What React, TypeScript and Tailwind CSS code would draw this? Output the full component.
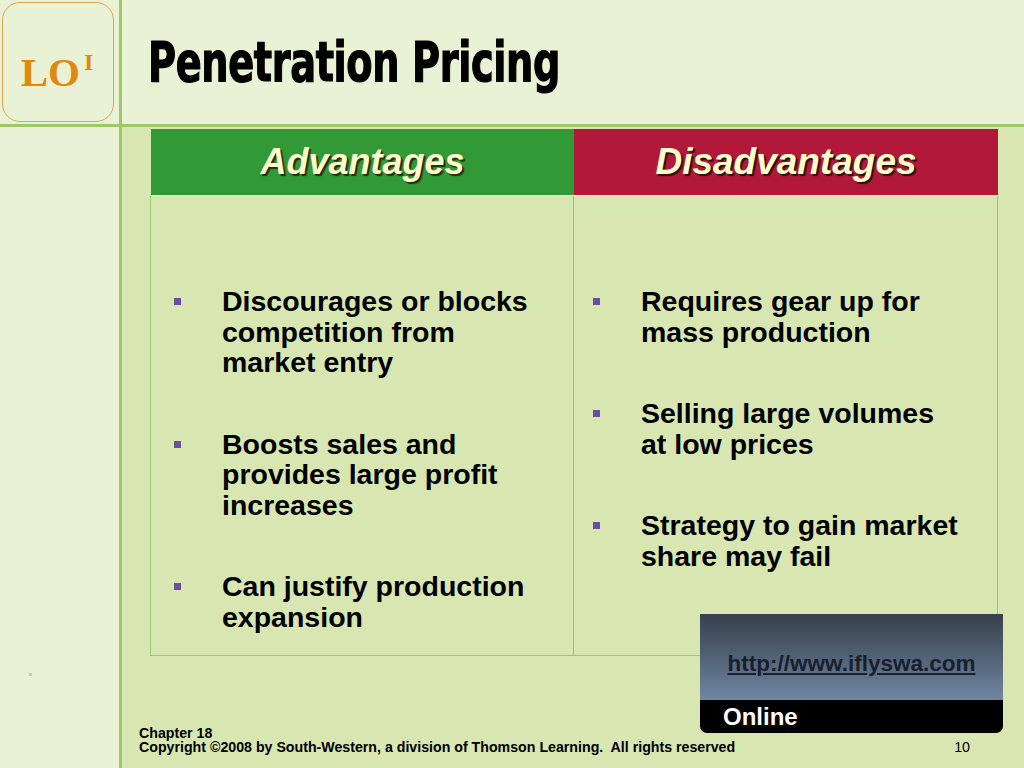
const advantages: string[][] = [
  ['Discourages or blocks', 'competition from', 'market entry'],
  ['Boosts sales and', 'provides large profit', 'increases'],
  ['Can justify production', 'expansion'],
];

const disadvantages: string[][] = [
  ['Requires gear up for', 'mass production'],
  ['Selling large volumes', 'at low prices'],
  ['Strategy to gain market', 'share may fail'],
];

const Bullets = ({ items, pad }: { items: string[][]; pad: string }) => (
  <ul className={`flex flex-col gap-[51px] pt-[90px] ${pad}`}>
    {items.map((lines, i) => (
      <li key={i} className="flex">
        <div className="w-[48px] shrink-0">
          <div className="mt-[12px] h-[7px] w-[7px] bg-[#6b4f9c]" />
        </div>
        <div className="whitespace-nowrap text-[28.5px] font-bold leading-[30.5px] text-black">
          {lines.map((l, j) => (
            <div key={j}>{l}</div>
          ))}
        </div>
      </li>
    ))}
  </ul>
);

const App = () => {
  return (
    <div
      className="relative flex h-[768px] w-[1024px] flex-col overflow-hidden bg-[#d8e7b2]"
      style={{ fontFamily: '"Liberation Sans", Arial, sans-serif' }}
    >
      {/* top band */}
      <div className="flex h-[124px] bg-[#eaf2d5]">
        <div className="w-[119px] shrink-0 p-[2px] pr-[5px]">
          <div className="flex h-[120px] w-[112px] items-start justify-center rounded-[18px] border border-[#e0a448] pt-[49px] pr-[2px]">
            <span
              className="text-[41px] font-bold leading-none text-[#e0890a]"
              style={{ fontFamily: '"Liberation Serif", serif' }}
            >
              LO
            </span>
            <span
              className="ml-[4px] -mt-[2px] text-[24px] font-bold leading-none text-[#e0890a]"
              style={{ fontFamily: '"Liberation Serif", serif' }}
            >
              I
            </span>
          </div>
        </div>
        <div className="w-[3px] shrink-0 bg-[#9cc965]" />
        <div className="pl-[26px] pt-[34px]">
          <h1
            className="inline-block origin-left scale-x-[0.76] whitespace-nowrap text-[56px] font-bold leading-none tracking-[-0.5px] text-black [-webkit-text-stroke:1.2px_black]"
            style={{ fontFamily: '"DejaVu Sans Condensed", "Liberation Sans", sans-serif' }}
          >
            Penetration Pricing
          </h1>
        </div>
      </div>
      <div className="h-[3px] bg-[#9cc965]" />

      {/* main band */}
      <div className="flex flex-1">
        <div className="relative w-[119px] shrink-0 bg-[#eaf2d5]">
          <div className="ml-[29px] mt-[546px] h-[3px] w-[3px] bg-[#b9d592]" />
        </div>
        <div className="w-[3px] shrink-0 bg-[#9cc965]" />
        <div className="flex flex-1 flex-col">
          <div className="ml-[28px] mr-[26px] mt-[2px] flex h-[527px] flex-col">
            <div className="grid grid-cols-[424px_424px] h-[66px]">
              <div className="ml-[1px] flex items-center justify-center bg-[#319a37]">
                <span className="text-[36px] font-bold italic text-[#ffffcc] [text-shadow:2px_2px_1px_#2a2a10]">
                  Advantages
                </span>
              </div>
              <div className="flex items-center justify-center bg-[#b2183a]">
                <span className="text-[37px] font-bold italic text-[#ffffcc] [text-shadow:2px_2px_1px_#2a1010]">
                  Disadvantages
                </span>
              </div>
            </div>
            <div className="grid flex-1 grid-cols-[424px_424px] border-t border-[#e6f0cf]">
              <div className="border-b border-l border-r border-[#8fc97b]">
                <Bullets items={advantages} pad="pl-[23px]" />
              </div>
              <div className="border-b border-r border-[#8fc97b]">
                <Bullets items={disadvantages} pad="pl-[19px]" />
              </div>
            </div>
          </div>

          <div className="ml-[17px] mr-[54px] mt-[70px] flex items-end justify-between text-[14.2px] leading-[14px] text-black">
            <div className="font-bold">
              <div>Chapter 18</div>
              <div className="whitespace-pre">
                Copyright ©2008 by South-Western, a division of Thomson Learning.  All rights reserved
              </div>
            </div>
            <div>10</div>
          </div>
        </div>
      </div>

      {/* online badge */}
      <div className="absolute left-[700px] top-[614px] w-[303px]">
        <div className="flex h-[86px] items-center justify-center bg-linear-to-b from-[#38404c] to-[#6f86a3] pt-[14px]">
          <span className="text-[22.5px] font-bold text-[#18202e] underline underline-offset-2">
            http://www.iflyswa.com
          </span>
        </div>
        <div className="h-[33px] rounded-b-[7px] bg-black pl-[23px] pt-[4px] text-[24px] font-bold leading-[26px] text-white">
          Online
        </div>
      </div>
    </div>
  );
};

export default App;
